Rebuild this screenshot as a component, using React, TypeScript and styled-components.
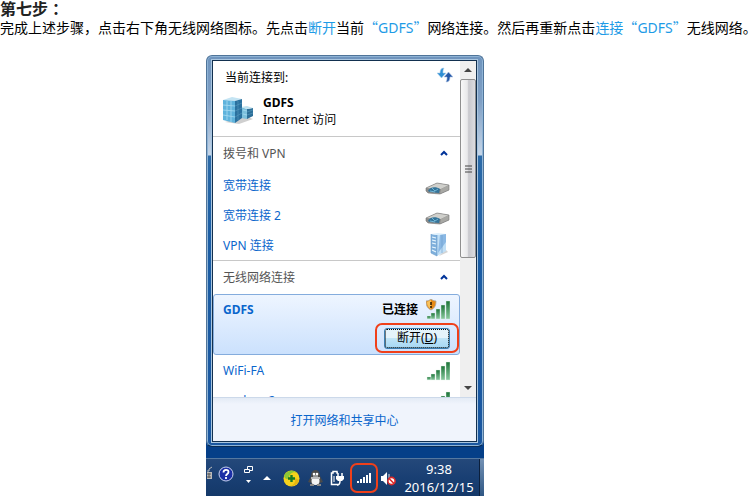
import React from "react";
import styled, { createGlobalStyle } from "styled-components";

const Global = createGlobalStyle`
  * { box-sizing: border-box; }
  body {
    margin: 0;
    background: #fff;
    color: #000;
    font-family: "Noto Sans", "Noto Sans CJK SC", sans-serif;
    font-size: 12px;
    overflow: hidden;
  }
  button { font: inherit; padding: 0; border: 0; background: none; cursor: pointer; }
  svg { display: block; flex: none; }
`;

const Heading = styled.h1`
  margin: 0;
  font: 700 16px/17px "Noto Sans CJK SC", sans-serif;
  color: #222;
`;

const Instruction = styled.p`
  margin: 0;
  padding-bottom: 17px;
  font: 14px/20px "Noto Sans CJK SC", sans-serif;
  white-space: nowrap;
`;

const Mark = styled.span`
  color: #1e9be6;
`;

const Latin = styled.span`
  font-family: "Noto Sans", sans-serif;
`;

const Punct = styled.span`
  font-family: "Noto Sans CJK TC", sans-serif;
`;

const Figure = styled.div`
  display: grid;
  grid-template-columns: 206fr 278fr 265fr;
`;

const Desktop = styled.div`
  grid-column: 2;
  background: linear-gradient(#fff 0 300px, #053f88 380px, #053f88);
`;

const Frame = styled.section`
  padding: 4px 6px 4px 5px;
  border: 1px solid #4f7499;
  border-bottom-color: #0a2c55;
  border-radius: 6px;
  box-shadow: inset 0 0 0 1px #8fb4d6;
  background: linear-gradient(#6f94bd, #7f9fc4 45px, #c6d6e8 99px, #2d6ba8 100px, #1b5ea5 180px, #1a57a0);
`;

const Panel = styled.div`
  border: 1px solid #12304f;
  outline: 1px solid #a9c6e0;
  background: #fff;
`;

const Body = styled.div`
  display: grid;
  grid-template-columns: 1fr 16px;
  height: 337px;
  border-bottom: 1px solid #ccd9ea;
`;

const List = styled.div`
  overflow: hidden;
`;

const Current = styled.div`
  height: 75px;
  padding: 6px 7px 0 10px;
`;

const CurrentTop = styled.div`
  display: flex;
  justify-content: space-between;
  align-items: flex-start;
  height: 27px;
  padding-left: 2px;
  line-height: 22px;
`;

const CurrentNetwork = styled.div`
  display: flex;
  align-items: center;
  gap: 8px;
  line-height: 17px;
`;

const Group = styled.button`
  display: flex;
  align-items: center;
  justify-content: space-between;
  width: 100%;
  height: 34px;
  && {
    padding: 0 12px 2px 10px;
    border-top: 1px solid #c8c8c8;
  }
  color: #555;
`;

const Row = styled.div`
  display: flex;
  align-items: center;
  justify-content: space-between;
  height: 30px;
  padding: 0 10px;
`;

const NetLink = styled.a`
  color: #0a66cc;
  text-decoration: none;
`;

const Selected = styled.div`
  height: 61px;
  padding-left: 9px;
  border: 1px solid #84acdd;
  border-radius: 3px;
  background: linear-gradient(#eef5ff, #cbe1fd);
`;

const SelectedTop = styled.div`
  display: flex;
  align-items: center;
  height: 28px;
  padding-right: 9px;
  gap: 8px;
  font-weight: 700;
`;

const Status = styled.span`
  margin-left: auto;
`;

const ButtonRow = styled.div`
  display: flex;
  justify-content: flex-end;
`;

const Ring = styled.div<{ $tight?: boolean }>`
  display: grid;
  place-items: center;
  width: ${(p) => (p.$tight ? "28px" : "84px")};
  height: 30px;
  border: 2px solid #f0401a;
  border-radius: 7px;
`;

const Disconnect = styled.button`
  width: 66px;
  height: 21px;
  outline: 1px dotted #000;
  outline-offset: -2px;
  line-height: 18px;
  && {
    border: 1px solid #3c7fb1;
    border-radius: 3px;
    background: linear-gradient(#e4f3fb 50%, #c0e4f7 50%, #a5d8f4);
  }
`;

const Scroll = styled.div`
  display: grid;
  grid-template-rows: 18px 179px 1fr 18px;
  background: #efefef;
`;

const Arrow = styled.button`
  display: grid;
  place-items: center;
`;

const Thumb = styled.div`
  display: grid;
  place-items: center;
  border: 1px solid #8f8f8f;
  border-radius: 2px;
  background: linear-gradient(90deg, #f8f8f8, #e8e8ea 45%, #c8c8cd 55%, #dcdce0);
`;

const Footer = styled.div`
  display: grid;
  place-items: center;
  height: 43px;
  background: linear-gradient(#e3ebf5, #f0f4fc 6px);
`;

const Taskbar = styled.footer`
  display: flex;
  align-items: center;
  height: 39px;
  margin-top: 11px;
  border-top: 1px solid #5578a0;
  background: linear-gradient(#24487a, #193f73 50%, #143868);
  color: #fff;
`;

const Tray = styled.div`
  display: flex;
  align-items: center;
  flex: 1;
`;

const TrayButton = styled.button<{ $w: number; $raised?: boolean }>`
  display: grid;
  place-items: ${(p) => (p.$raised ? "start center" : "center")};
  flex: none;
  width: ${(p) => p.$w}px;
  height: 24px;
`;

const Clock = styled.time`
  width: 80px;
  text-align: center;
  font-size: 13px;
  line-height: 18px;
`;

const ShowDesktop = styled.button`
  width: 5px;
  height: 100%;
  && {
    border-left: 1px solid #0b1f3c;
    background: linear-gradient(#7391b4, #2d5582);
  }
`;

const Chevron = () => (
  <svg width="8" height="6" viewBox="0 0 8 6"><path d="M1 5 4 2 7 5" fill="none" stroke="#003399" strokeWidth="2" /></svg>
);

const Refresh = () => (
  <svg width="16" height="16" viewBox="0 0 16 16">
    <path d="M7 1C4 1 3 3 3 6H0l4.500 5L9 6H6c0-2 0-3 1-5Z" fill="#2f8fd4" stroke="#b4d4ec" strokeWidth=".6" />
    <path d="M9 15c3 0 4-2 4-5h3l-4.500-5L7 10h3c0 2 0 3-1 5Z" fill="#2458a8" stroke="#b4c8e4" strokeWidth=".6" />
  </svg>
);

const Buildings = () => (
  <svg width="32" height="28" viewBox="0 0 32 28">
    <path d="m2 25 14 2 14-5-8-3Z" fill="#cfcfcf" />
    <path d="m18 10 6 2v10l-6-1Z" fill="#7cc0dc" />
    <path d="m24 12 6-1v8l-6 3Z" fill="#2d6f98" />
    <path d="m18 10 6-1 6 2-6 1Z" fill="#bfe2f0" />
    <path d="m0 3 9-3 10 2-7 2Z" fill="#c4e4f3" />
    <path d="m0 3 12 1v22L0 23Z" fill="#5fb3dc" />
    <path d="m12 4 7-2v19l-7 5Z" fill="#2a719f" />
    <path d="M4 4v19M8 4v21M0 8l12 1M0 13l12 1M0 18l12 2M20 13l4 1M20 17l4 1" fill="none" stroke="#a8dcf3" strokeWidth=".8" />
    <path d="m12 9 7-3M12 14l7-3M12 20l7-4M15 4v19M24 15l6-2M24 18l6-2" fill="none" stroke="#579bc0" strokeWidth=".6" />
  </svg>
);

const Modem = () => (
  <svg width="25" height="19" viewBox="0 -6 25 19">
    <path d="M1 6 12 1l12 2v5l-9 4-12-1-2-2Z" fill="#8d8d8b" />
    <path d="M1 6 12 1l12 2-8 4Z" fill="#d0d0cc" />
    <path d="m16 7 8-4v5l-9 4Z" fill="#a8a8a4" />
    <path d="M3 9c1-4 8-5 12-2l-1 4-9-1Z" fill="#34749a" />
    <path d="m7 6 3 3 3-2M5 9l5 1" fill="none" stroke="#8ed2ef" strokeWidth=".7" />
    <path d="M1 6 12 1l12 2v5l-9 4-12-1-2-2Z" fill="none" stroke="#777" strokeWidth=".6" />
  </svg>
);

const Server = () => (
  <svg width="20" height="24" viewBox="0 0 20 24">
    <path d="m9 23 9-4-3-3Z" fill="#aaa" opacity=".5" />
    <path d="m1 1 6 1v21l-6-3Z" fill="#7fb0dc" />
    <path d="M1 1 8 0l8 1-9 1Z" fill="#dceffc" />
    <path d="m7 2 9-1v17l-9 5Z" fill="#c0dff6" />
    <path d="m10 2 6-1v8L8 20Z" fill="#8ab8e4" />
    <path d="m2 4 4 1M2 7l4 1M2 10l4 1M2 14l4 1M2 17l4 2" stroke="#e9f7ff" strokeWidth="1.2" />
    <path d="M1 1v19l6 3V2M12 2v18" fill="none" stroke="#6a9ccb" strokeWidth=".6" />
  </svg>
);

const Bars = ({ shield = false }: { shield?: boolean }) => (
  <svg width="24" height="21" viewBox="0 0 24 21">
    <defs>
      <linearGradient id="green" x2="0" y2="1"><stop stopColor="#1c7438" /><stop offset="1" stopColor="#8ac9a0" /></linearGradient>
    </defs>
    {[[1, 17, 3], [5, 14, 6], [10, 10, 10], [15, 6, 14], [20, 2, 18]].map(([x, y, h]) => (
      <rect key={x} x={x} y={y} width="4" height={h} fill="url(#green)" stroke="#e4f2e8" strokeWidth=".4" />
    ))}
    {shield && (
      <g>
        <path d="M5 0c1 1 3 2 5 2 0 4-1 7-5 9C1 9 0 6 0 2c2 0 4-1 5-2Z" fill="#e78b16" stroke="#aaa49a" strokeWidth=".8" />
        <path d="M5 1v9C2 8 1 6 1 3Z" fill="#f8c25c" />
        <path d="M5 3v3M5 7v2" stroke="#342000" strokeWidth="1.6" />
      </g>
    )}
  </svg>
);

const Triangle = ({ down = false, color = "#444" }: { down?: boolean; color?: string }) => (
  <svg width="8" height="4" viewBox="0 0 8 4"><path d={down ? "M0 0h8L4 4Z" : "M0 4h8L4 0Z"} fill={color} /></svg>
);

const Keyboard = () => (
  <svg width="6" height="14" viewBox="0 0 6 14">
    <path d="M0 5h2V3l3-2" fill="none" stroke="#bbb" />
    <path d="M0 6h5v7H0Z" fill="#bbb" />
    <path d="M0 8h4M0 11h4M2 7v5" fill="none" stroke="#444" strokeWidth=".8" />
  </svg>
);

const Help = () => (
  <svg width="16" height="16" viewBox="0 0 16 16">
    <circle cx="8" cy="8" r="7" fill="#1b2fa6" stroke="#c9d2ee" />
    <path d="M5.5 6.500C5.500 3 10.500 3 10.500 6c0 2-2.500 2-2.500 4M8 11v2" fill="none" stroke="#fff" strokeWidth="1.8" />
  </svg>
);

const Restore = () => (
  <svg width="9" height="20" viewBox="0 0 9 20">
    <path d="M3.500 3.500v-3h5v4H6M.5 3.500h5v3h-5Z" fill="none" stroke="#fff" />
    <path d="M2 14h5l-2.500 3Z" fill="#fff" />
  </svg>
);

const Guard = () => (
  <svg width="17" height="17" viewBox="0 0 17 17">
    <circle cx="8.5" cy="8.5" r="8" fill="#f6d21c" />
    <path d="M1 6a8 8 0 0 1 13-3C10 1 6 4 6 8c-2 2-4 1-5-2Z" fill="#8cc935" />
    <path d="M16 10a8 8 0 0 1-9 6c4-1 6-4 5-8Z" fill="#e6b511" />
    <path d="M8.5 5v7M5 8.5h7" stroke="#177a24" strokeWidth="2.4" />
  </svg>
);

const Penguin = () => (
  <svg width="15" height="16" viewBox="0 0 15 16">
    <path d="M3 6c0-8 9-8 9 0l3 6-3 1c0 3-9 3-9 0l-3-1Z" fill="#4a4a4a" />
    <ellipse cx="7.5" cy="11" rx="4" ry="4" fill="#f4f4f4" />
    <path d="M3 8h9" stroke="#bbb" strokeWidth="2" />
    <circle cx="6" cy="4" r="1.3" fill="#fff" /><circle cx="9" cy="4" r="1.3" fill="#fff" />
    <path d="M5 6h5" stroke="#ddd" /><path d="M2 15h4M9 15h4" stroke="#888" strokeWidth="2" />
  </svg>
);

const Power = () => (
  <svg width="14" height="16" viewBox="0 0 14 16">
    <path d="M8 14.500H1.500V3H3V1.500h4V3h1" fill="none" stroke="#fff" strokeWidth="1.5" />
    <path d="M4 6v6" stroke="#fff" />
    <path d="M8 3v4M12 3v4" stroke="#fff" strokeWidth="1.5" />
    <path d="M6 6h8v3l-2 2H8L6 9Z" fill="#fff" />
    <path d="M10 11c0 3-1 4-3 4" fill="none" stroke="#fff" strokeWidth="1.5" />
  </svg>
);

const WhiteBars = () => (
  <svg width="15" height="12" viewBox="0 0 15 12">
    {[0, 1, 2, 3, 4].map((i) => <rect key={i} x={i * 3} y={9 - i * 2} width="2" height={2 + i * 2} fill="#fff" />)}
  </svg>
);

const Muted = () => (
  <svg width="15" height="15" viewBox="0 0 15 15">
    <path d="M0 5h2l4-4v13l-4-4H0Z" fill="#fff" /><path d="M8 3v4" stroke="#ddd" />
    <circle cx="10.5" cy="10" r="3.6" fill="#fff" stroke="#dc2929" strokeWidth="1.6" />
    <path d="m8 7.500 5 5" stroke="#dc2929" strokeWidth="1.6" />
  </svg>
);

export default function App() {
  return (
    <main>
      <Global />
      <Heading>第七步<Punct>：</Punct></Heading>
      <Instruction>
        完成上述步骤，点击右下角无线网络图标。先点击<Mark>断开</Mark>当前<Mark>“<Latin>GDFS</Latin>”</Mark>网络连接。然后再重新点击<Mark>连接“<Latin>GDFS</Latin>”</Mark>无线网络。
      </Instruction>
      <Figure>
        <Desktop>
          <Frame>
            <Panel>
              <Body>
                <List>
                  <Current>
                    <CurrentTop>当前连接到:<Refresh /></CurrentTop>
                    <CurrentNetwork>
                      <Buildings />
                      <div><strong>GDFS</strong><div>Internet 访问</div></div>
                    </CurrentNetwork>
                  </Current>
                  <Group>拨号和 VPN<Chevron /></Group>
                  <Row><NetLink href="#b1">宽带连接</NetLink><Modem /></Row>
                  <Row><NetLink href="#b2">宽带连接 2</NetLink><Modem /></Row>
                  <Row><NetLink href="#vpn">VPN 连接</NetLink><Server /></Row>
                  <Group>无线网络连接<Chevron /></Group>
                  <Selected>
                    <SelectedTop>
                      <NetLink href="#gdfs">GDFS</NetLink>
                      <Status>已连接</Status>
                      <Bars shield />
                    </SelectedTop>
                    <ButtonRow><Ring><Disconnect>断开(<u>D</u>)</Disconnect></Ring></ButtonRow>
                  </Selected>
                  <Row><NetLink href="#wifi">WiFi-FA</NetLink><Bars /></Row>
                  <Row><NetLink href="#other">yuehao-2</NetLink><Bars /></Row>
                </List>
                <Scroll>
                  <Arrow aria-label="Scroll up"><Triangle /></Arrow>
                  <Thumb><svg width="7" height="8" viewBox="0 0 7 8"><path d="M0 1h7M0 4h7M0 7h7" stroke="#444" /></svg></Thumb>
                  <span />
                  <Arrow aria-label="Scroll down"><Triangle down /></Arrow>
                </Scroll>
              </Body>
              <Footer><NetLink href="#center">打开网络和共享中心</NetLink></Footer>
            </Panel>
          </Frame>
          <Taskbar>
            <Tray>
              <TrayButton $w={8} $raised aria-label="Keyboard"><Keyboard /></TrayButton>
              <TrayButton $w={24} $raised aria-label="Help"><Help /></TrayButton>
              <TrayButton $w={20} $raised aria-label="Restore"><Restore /></TrayButton>
              <TrayButton $w={18} aria-label="Show hidden icons"><Triangle color="#fff" /></TrayButton>
              <TrayButton $w={30} aria-label="Guard"><Guard /></TrayButton>
              <TrayButton $w={18} aria-label="Messenger"><Penguin /></TrayButton>
              <TrayButton $w={26} aria-label="Power"><Power /></TrayButton>
              <Ring $tight><TrayButton $w={24} aria-label="Network"><WhiteBars /></TrayButton></Ring>
              <TrayButton $w={20} aria-label="Volume"><Muted /></TrayButton>
            </Tray>
            <Clock>9:38<br />2016/12/15</Clock>
            <ShowDesktop aria-label="Show desktop" />
          </Taskbar>
        </Desktop>
      </Figure>
    </main>
  );
}
